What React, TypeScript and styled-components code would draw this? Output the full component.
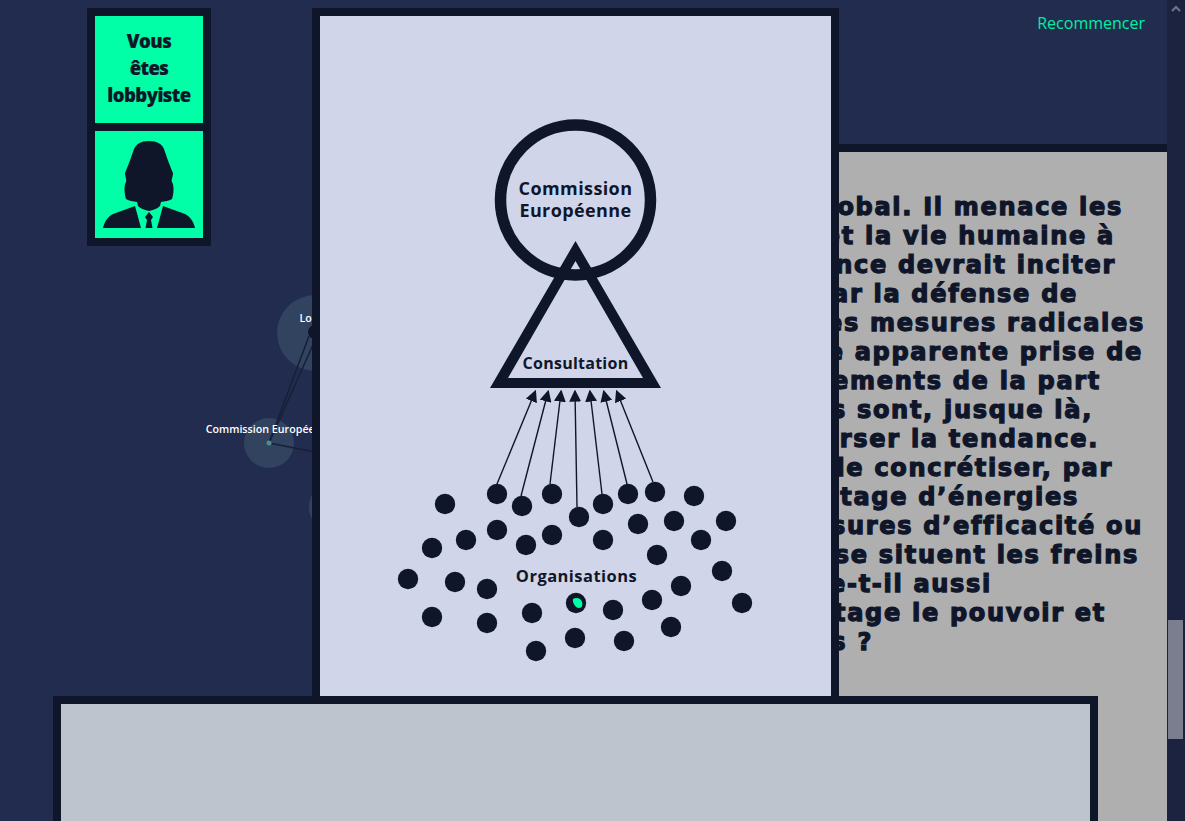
import React from 'react'
import styled, { createGlobalStyle } from 'styled-components'

const dark = '#10162a'
const mint = '#00ffa6'

const GlobalStyle = createGlobalStyle`
  html, body {
    margin: 0;
    height: 100%;
    overflow: hidden;
    background: #212c4f;
  }
`
const Page = styled.div`
  display: flex;
  height: 821px;
  font-family: 'Open Sans', 'Liberation Sans', sans-serif;
  color: ${dark};
`
const Stage = styled.main`
  position: relative;
  flex: 1;
  overflow: hidden;
  background: #212c4f;
`
const ScrollTrack = styled.div`
  width: 18px;
  position: relative;
  background: #1c2340;
`
const ScrollArrow = styled.div`
  height: 17px;
  display: flex;
  align-items: center;
  justify-content: center;
  background: #1c2340;
`
const ScrollThumb = styled.div`
  position: absolute;
  top: 620px;
  left: 1px;
  width: 15px;
  height: 119px;
  background: #7a7e8e;
`
const Restart = styled.a`
  position: absolute;
  top: 12px;
  right: 22px;
  font-size: 16px;
  line-height: 22px;
  color: #00f0a0;
  z-index: 5;
`
const NetworkSvg = styled.svg`
  position: absolute;
  top: 0;
  left: 0;
`
const RoleCard = styled.aside`
  position: absolute;
  top: 8px;
  left: 87px;
  width: 108px;
  display: flex;
  flex-direction: column;
  gap: 8px;
  padding: 8px;
  background: ${dark};
  z-index: 2;
`
const RoleCell = styled.div`
  height: 107px;
  display: flex;
  align-items: center;
  justify-content: center;
  background: ${mint};
`
const RoleTitle = styled.div`
  padding-bottom: 5px;
  font-size: 18.5px;
  font-weight: 800;
  line-height: 27px;
  letter-spacing: -0.55px;
  text-align: center;
  -webkit-text-stroke: 0.2px ${dark};
`
const TextPanel = styled.section`
  position: absolute;
  top: 144px;
  left: 320px;
  right: 0;
  height: 700px;
  box-sizing: border-box;
  border-top: 8px solid ${dark};
  padding-top: 41px;
  background: #afafaf;
  z-index: 1;
`
const Line = styled.div<{ $end: number }>`
  height: 29px;
  line-height: 29px;
  white-space: nowrap;
  text-align: right;
  padding-right: ${(p) => p.$end}px;
  font-family: 'DejaVu Sans', sans-serif;
  font-weight: 700;
  font-size: 24px;
  letter-spacing: 1.7px;
  -webkit-text-stroke: 1.25px ${dark};
`
const Modal = styled.section`
  position: absolute;
  top: 8px;
  left: 312px;
  width: 511px;
  height: 760px;
  border: 8px solid ${dark};
  background: #d0d5ea;
  z-index: 3;
`
const BottomCard = styled.section`
  position: absolute;
  top: 696px;
  left: 53px;
  width: 1029px;
  height: 200px;
  border: 8px solid ${dark};
  background: #bdc4ce;
  z-index: 4;
`

const textLines: [string, number][] = [
  ['global. Il menace les', 44],
  ['et la vie humaine à', 52],
  ['urgence devrait inciter', 51],
  ['par la défense de', 89],
  ['des mesures radicales', 22],
  ['une apparente prise de', 24],
  ['engagements de la part', 66],
  ['mesures sont, jusque là,', 74],
  ['inverser la tendance.', 68],
  ['de concrétiser, par', 54],
  ['davantage d’énergies', 88],
  ['mesures d’efficacité ou', 24],
  ['où se situent les freins', 28],
  ['ne pose-t-il aussi', 175],
  ['davantage le pouvoir et', 61],
  ['citoyens ?', 294],
]

const dots = [
  [445, 504], [497, 494], [522, 506], [552, 494], [603, 504], [628, 494], [655, 492], [694, 496],
  [579, 517], [638, 524], [674, 521], [726, 521], [497, 530], [466, 540], [432, 548], [526, 545],
  [552, 535], [603, 540], [701, 540], [657, 555], [408, 579], [455, 582], [487, 589], [722, 571],
  [681, 586], [652, 600], [742, 603], [432, 617], [487, 623], [532, 613], [576, 603], [613, 610],
  [671, 627], [624, 641], [575, 638], [536, 651],
]

const arrows = [
  [497, 484, 535, 392],
  [521, 496, 548, 392],
  [550, 484, 561, 392],
  [577, 507, 575, 392],
  [602, 494, 590, 392],
  [627, 484, 604, 392],
  [653, 482, 617, 392],
]

function Network() {
  return (
    <NetworkSvg width="330" height="560" viewBox="0 0 330 560">
      <circle cx="315" cy="333" r="38" fill="#32435f" />
      <circle cx="269" cy="443" r="25" fill="#32435f" />
      <circle cx="335" cy="507" r="26" fill="#32435f" />
      <g stroke="#171f3a" strokeWidth="1.6" fill="none">
        <line x1="269" y1="443" x2="309" y2="336" />
        <line x1="269" y1="443" x2="316" y2="338" />
        <line x1="269" y1="443" x2="315" y2="452" />
      </g>
      <circle cx="315" cy="332" r="7" fill="#10162a" />
      <circle cx="269" cy="443" r="2.5" fill="#4d8c8c" />
      <g fill="#fff" fontFamily="'Open Sans', sans-serif" fontSize="10.7" fontWeight="600">
        <text x="299.5" y="322">Lobbyiste</text>
        <text x="205.7" y="433">Commission Européenne</text>
      </g>
    </NetworkSvg>
  )
}

function Lobbyist() {
  return (
    <svg width="108" height="107" viewBox="0 0 108 107" fill={dark}>
      <path d="M54 10C46 10 41 13 39 18C37 24 33 35 30 42C30 46 32 49 31 51C29 54 29 62 31 68C34 70 38 70 42 71L43 75C46 78 50 79 54 80C58 79 62 78 65 75L66 71C70 70 74 70 77 68C79 62 79 54 77 51C76 49 78 46 78 42C75 35 71 24 69 18C67 13 62 10 54 10Z" />
      <path d="M40 75L46 97H8C9 92 12 86 18 83Z" />
      <path d="M68 75L62 97H100C99 92 96 86 90 83Z" />
      <path d="M54 81L58 86L56 89L57.5 97H50.5L52 89L50 86Z" />
    </svg>
  )
}

function Diagram() {
  return (
    <svg width="511" height="680" viewBox="320 16 511 680">
      <defs>
        <marker id="head" viewBox="0 0 10 10" refX="8" refY="5" markerWidth="12" markerHeight="12" markerUnits="userSpaceOnUse" orient="auto">
          <path d="M0 0L10 5L0 10Z" fill={dark} />
        </marker>
      </defs>
      <circle cx="575.5" cy="200" r="75" fill="none" stroke={dark} strokeWidth="11.5" />
      <path
        fillRule="evenodd"
        fill={dark}
        d="M575.5 241L661 388H490ZM575.5 261L508 378H643Z"
      />
      <g fill={dark} fontWeight="700" textAnchor="middle">
        <text x="575.5" y="195" fontSize="18" letterSpacing="0.4">Commission</text>
        <text x="575.5" y="217" fontSize="18" letterSpacing="0.4">Européenne</text>
        <text x="575.5" y="369" fontSize="16" letterSpacing="0.25">Consultation</text>
        <text x="576.5" y="582" fontSize="16.5" letterSpacing="0.45">Organisations</text>
      </g>
      {arrows.map(([x1, y1, x2, y2]) => (
        <line key={x1} x1={x1} y1={y1} x2={x2} y2={y2} stroke={dark} strokeWidth="1.4" markerEnd="url(#head)" />
      ))}
      {dots.map(([cx, cy]) => (
        <circle key={`${cx}-${cy}`} cx={cx} cy={cy} r="10.2" fill={dark} />
      ))}
      <path d="M573 599C576 597 581 598 582 602C583 605 582 608 579 608C576 608 572 603 573 599Z" fill={mint} />
    </svg>
  )
}

export default function App() {
  return (
    <Page>
      <GlobalStyle />
      <Stage>
        <Network />
        <Restart>Recommencer</Restart>
        <RoleCard>
          <RoleCell>
            <RoleTitle>
              Vous
              <br />
              êtes
              <br />
              lobbyiste
            </RoleTitle>
          </RoleCell>
          <RoleCell>
            <Lobbyist />
          </RoleCell>
        </RoleCard>
        <TextPanel>
          {textLines.map(([text, end]) => (
            <Line key={text} $end={end}>
              {text}
            </Line>
          ))}
        </TextPanel>
        <Modal>
          <Diagram />
        </Modal>
        <BottomCard />
      </Stage>
      <ScrollTrack>
        <ScrollArrow>
          <svg width="10" height="7" viewBox="0 0 10 7">
            <path d="M1 6L5 2L9 6" fill="none" stroke="#6f7486" strokeWidth="2" />
          </svg>
        </ScrollArrow>
        <ScrollThumb />
      </ScrollTrack>
    </Page>
  )
}
